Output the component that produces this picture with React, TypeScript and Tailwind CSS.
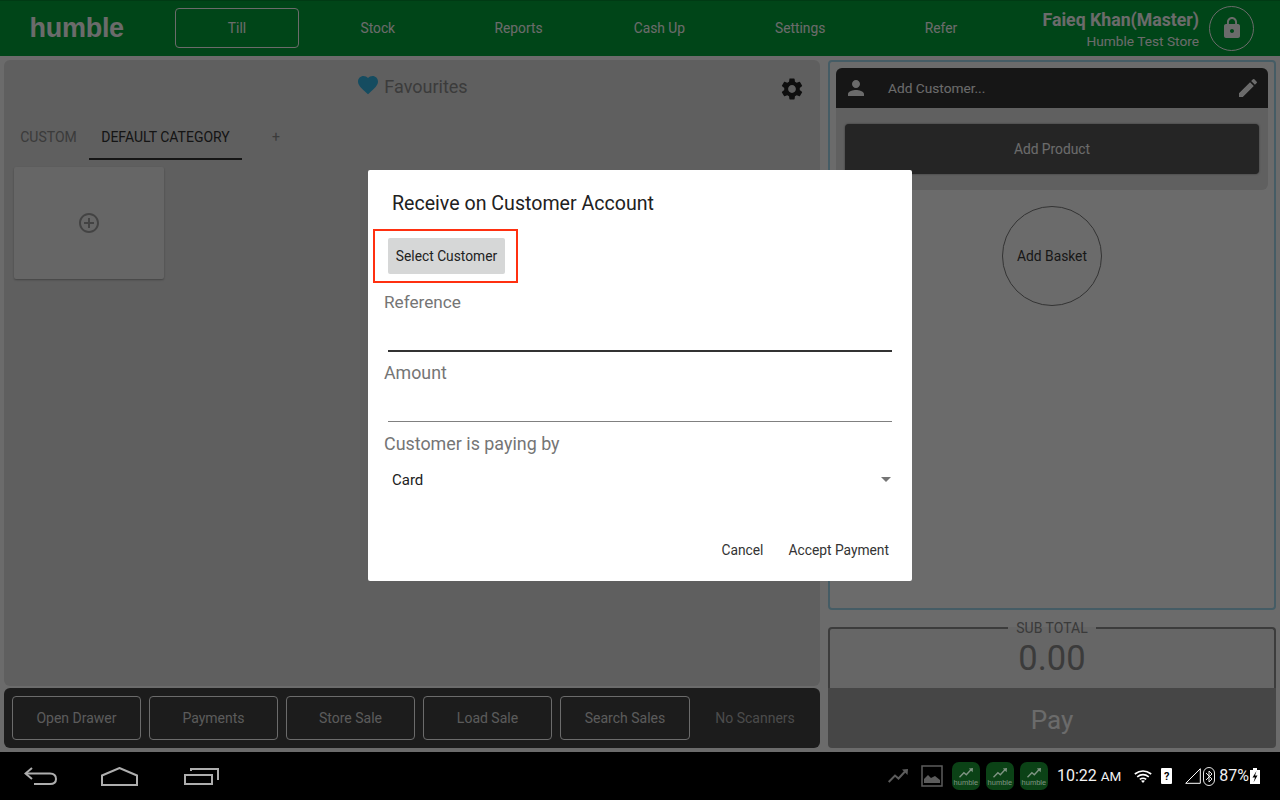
import { MdAddCircleOutline, MdArrowDropDown, MdEdit, MdFavorite, MdLock, MdPerson, MdSettings } from 'react-icons/md';

const navItems = ['Stock', 'Reports', 'Cash Up', 'Settings', 'Refer'];
const footerButtons = ['Open Drawer', 'Payments', 'Store Sale', 'Load Sale', 'Search Sales'];

function TrendIcon({ className }: { className?: string }) {
  return (
    <svg viewBox="0 0 20 14" className={className} fill="none" stroke="currentColor" strokeWidth="2">
      <path d="M0.7 13 L7 6.5 L10.5 9.5 L17 2.5" />
      <path d="M14 0.5 L20 0 L19.5 6 Z" stroke="none" fill="currentColor" />
    </svg>
  );
}

function AppIcon() {
  return (
    <div className="w-[28px] h-[28px] rounded-[7px] bg-[#0b4216] flex flex-col items-center justify-center text-[#7f9483]">
      <TrendIcon className="w-[14px] h-[10px] mt-[2px]" />
      <span className="text-[7.5px] leading-[9px] font-['Liberation_Sans',sans-serif]">humble</span>
    </div>
  );
}

function StatusBar() {
  return (
    <div className="h-[48px] bg-black flex items-center justify-between text-white">
      <div className="flex items-center text-[#aeaeae] pl-[24px]">
        <svg viewBox="0 0 33 18" className="w-[33px] h-[18px]" fill="none" stroke="currentColor" strokeWidth="2">
          <path d="M8 1 L1.5 6.5 L8 12" />
          <path d="M2 6.5 H26 Q32 6.5 32 12 Q32 17 26 17 H10" />
        </svg>
        <svg viewBox="0 0 37 19" className="w-[37px] h-[19px] ml-[44px]" fill="none" stroke="currentColor" strokeWidth="2">
          <path d="M1 18 V8.5 L18.5 1 L36 8.5 V18 Z" />
        </svg>
        <svg viewBox="0 0 35 18" className="w-[35px] h-[18px] ml-[46px]" fill="none" stroke="currentColor" strokeWidth="2">
          <path d="M1 8 H28 V17 H1 Z" />
          <path d="M7 4 V2 H34 V13" />
        </svg>
      </div>
      <div className="flex items-center pr-[20px]">
        <TrendIcon className="w-[20px] h-[14px] text-[#5c5c5c]" />
        <svg viewBox="0 0 22 22" className="w-[22px] h-[22px] ml-[13px] text-[#5c5c5c]" fill="none" stroke="currentColor" strokeWidth="1.5">
          <rect x="1" y="1" width="20" height="20" />
          <path d="M3 18 V14 L7 10 L10 13 L14 11 L19 15 V18 Z" fill="currentColor" stroke="none" />
        </svg>
        <div className="flex gap-[6px] ml-[9px]">
          <AppIcon />
          <AppIcon />
          <AppIcon />
        </div>
        <span className="ml-[9px] text-[16px] leading-none text-[#f2f2f2]">
          10:22 <span className="text-[13.5px]">AM</span>
        </span>
        <svg viewBox="0 0 18 13" className="w-[18px] h-[13px] ml-[13px]" fill="none" stroke="currentColor" strokeWidth="1.6">
          <path d="M0.8 4 Q9 -2 17.2 4" />
          <path d="M3.2 6.8 Q9 2.4 14.8 6.8" />
          <path d="M5.8 9.4 Q9 7 12.2 9.4" />
          <path d="M9 13 L7 10.8 Q9 9.6 11 10.8 Z" fill="currentColor" stroke="none" />
        </svg>
        <div className="w-[11px] h-[16px] ml-[9px] bg-white rounded-[1px] flex items-center justify-center text-black text-[11px] font-bold leading-none">?</div>
        <svg viewBox="0 0 16 16" className="w-[16px] h-[16px] ml-[13px]" fill="none" stroke="currentColor" strokeWidth="1">
          <path d="M0.7 15.3 L15.3 0.7 V15.3 Z" />
        </svg>
        <svg viewBox="0 0 12 19" className="w-[12px] h-[19px] ml-[2px]" fill="none" stroke="currentColor" strokeWidth="0.9">
          <rect x="0.5" y="0.5" width="11" height="18" rx="5.5" />
          <path d="M3 6 L9 12 L6 15 V4 L9 7 L3 13" />
        </svg>
        <span className="ml-[4px] text-[16px] leading-none text-[#f2f2f2]">87%</span>
        <svg viewBox="0 0 10 16" className="w-[10px] h-[16px] ml-[1px]">
          <path d="M3 0 H7 V2 H10 V16 H0 V2 H3 Z" fill="#fff" />
          <path d="M6.5 3 L2.5 9.5 H5 L3.5 14.5 L7.5 7.5 H5 Z" fill="#000" />
        </svg>
      </div>
    </div>
  );
}

export default function App() {
  return (
    <div className="relative w-[1280px] h-[800px] overflow-hidden bg-white font-['Roboto',sans-serif]">
      {/* Top bar */}
      <div className="h-[56px] bg-[#00a439] border-t border-[#008a30] pb-px flex items-center text-white">
        <div className="w-[166.6px] pl-[29.6px] text-[27px] font-bold tracking-[-0.3px] font-['Liberation_Sans',sans-serif]">humble</div>
        <div className="grid grid-cols-[repeat(6,140.8px)] text-[13.8px]">
          <div className="flex justify-center">
            <div className="w-[124px] h-[40px] border border-white rounded-[4px] flex items-center justify-center">Till</div>
          </div>
          {navItems.map(n => (
            <div key={n} className="flex items-center justify-center">{n}</div>
          ))}
        </div>
        <div className="ml-auto text-right pr-[10px] pt-[4px]">
          <div className="text-[17.7px] leading-[22px] font-bold">Faieq Khan(Master)</div>
          <div className="text-[13.7px] leading-[20px]">Humble Test Store</div>
        </div>
        <div className="w-[45px] h-[45px] mr-[26px] rounded-full border border-white flex items-center justify-center">
          <MdLock className="w-[24px] h-[24px]" />
        </div>
      </div>

      <div className="flex h-[696px] pt-[4px] pb-[4px] pl-[4px]">
        {/* Left column */}
        <div className="w-[816px] flex flex-col">
          <div className="h-[626px] bg-[#e2e2e2] rounded-[6px]">
            <div className="h-[53px] grid grid-cols-[1fr_auto_1fr] items-center">
              <div />
              <div className="flex items-center gap-[5px] text-[18px] text-[#8e8e8e]">
                <MdFavorite className="w-[24px] h-[24px] text-[#33b5e5] -mt-[3px] -mr-[1px]" />
                Favourites
              </div>
              <div className="flex justify-end pr-[15px]">
                <MdSettings className="w-[26px] h-[26px] mt-[4px] text-[#222222]" />
              </div>
            </div>
            <div className="flex h-[47px] pl-[4px] text-sm">
              <div className="w-[81px] flex items-center justify-center text-[#8c8c8c]">CUSTOM</div>
              <div className="w-[153px] pt-[2px] flex items-center justify-center text-[#333333] border-b-2 border-[#333333]">DEFAULT CATEGORY</div>
              <div className="w-[68px] flex items-center justify-center text-[#8c8c8c]">+</div>
            </div>
            <div className="ml-[10px] mt-[7px] w-[150px] h-[112px] bg-[#f2f2f2] rounded-[2px] shadow-[0_1px_2px_rgba(0,0,0,0.3)] flex items-center justify-center">
              <MdAddCircleOutline className="w-[24px] h-[24px] text-[#a0a0a0]" />
            </div>
          </div>
          <div className="mt-[2px] h-[60px] bg-[#434343] rounded-[6px] flex items-center gap-[8px] pl-[8px] text-sm text-[#d8d8d8]">
            {footerButtons.map((b, i) => (
              <div key={b} className={`${i === 4 ? 'w-[130px]' : 'w-[129px]'} shrink-0 h-[44px] border border-[#ffffff] rounded-[4px] flex items-center justify-center`}>{b}</div>
            ))}
            <div className="flex-1 text-center -ml-[8px] text-[#b4b4b4]">No Scanners</div>
          </div>
        </div>

        {/* Right column */}
        <div className="w-[448px] ml-[8px] flex flex-col">
          <div className="h-[550px] border-2 border-[#a4dcf0] rounded-[4px] p-[6px]">
            <div className="h-[122px] bg-[#e4e4e4] rounded-[6px] overflow-hidden">
              <div className="h-[40px] bg-[#353535] flex items-center text-[13.7px] text-white">
                <MdPerson className="w-[24px] h-[24px] ml-[8px]" />
                <span className="ml-[20px]">Add Customer...</span>
                <MdEdit className="w-[24px] h-[24px] ml-auto mr-[8px]" />
              </div>
              <div className="mx-[9px] mt-[16px] h-[50px] bg-[#585858] rounded-[4px] shadow-[0_0_2px_rgba(0,0,0,0.5)] flex items-center justify-center text-[13.8px] text-white">Add Product</div>
            </div>
            <div className="mt-[16px] mx-auto w-[100px] h-[100px] rounded-full border border-[#7a7a7a] flex items-center justify-center text-[13.8px] text-[#3a3a3a]">Add Basket</div>
          </div>
          <fieldset className="mt-[11px] flex-1 min-h-0 border-2 border-b-0 border-[#8f8f8f] rounded-t-[4px] bg-[#f2f2f2] flex flex-col">
            <legend className="mx-auto px-[8px] text-sm leading-[14px] text-[#8a8a8a]">SUB TOTAL</legend>
            <div className="mt-[2px] text-center text-[34.5px] leading-[42px] text-[#8e8e8e]">0.00</div>
          </fieldset>
          <div className="h-[60px] pt-[4px] bg-[#a7a7a7] rounded-b-[4px] flex items-center justify-center text-[26px] text-white">Pay</div>
        </div>
      </div>

      <StatusBar />

      {/* Dialog with scrim, status bar stays undimmed */}
      <div className="absolute inset-x-0 top-0 h-[752px] bg-black/[0.58] flex items-center justify-center">
        <div className="w-[544px] h-[411px] mb-px bg-white rounded-[2px] relative">
          <div className="pl-[24px] pt-[21px] text-[19.6px] leading-[26px] text-[#212121]">Receive on Customer Account</div>
          <div className="ml-[5px] mt-[12px] w-[145px] h-[54px] border-2 border-[#ff3010] pl-[13px] pt-[7px]">
            <div className="w-[117px] h-[36px] bg-[#d6d7d7] rounded-[2px] flex items-center justify-center text-[13.8px] text-[#212121]">Select Customer</div>
          </div>
          <div className="px-[16px] pr-[20px]">
            <div className="mt-[7px] text-[17.2px] leading-[24px] text-[#757575]">Reference</div>
            <div className="ml-[4px] mt-[36px] h-[2px] bg-[#333333]" />
            <div className="mt-[9px] text-[17.8px] leading-[24px] text-[#757575]">Amount</div>
            <div className="ml-[4px] mt-[36px] h-px bg-[#808080]" />
            <div className="mt-[10px] text-[17.9px] leading-[24px] text-[#757575]">Customer is paying by</div>
          </div>
          <div className="flex items-center justify-between pl-[24px] pr-[14px] mt-[12px] h-[24px]">
            <span className="text-[15px] text-[#212121]">Card</span>
            <MdArrowDropDown className="w-[24px] h-[24px] -mt-[2px] text-[#757575]" />
          </div>
          <div className="flex justify-end gap-[25px] pr-[23px] mt-[48px] text-[13.8px] text-[#333333]">
            <span>Cancel</span>
            <span>Accept Payment</span>
          </div>
        </div>
      </div>
    </div>
  );
}
